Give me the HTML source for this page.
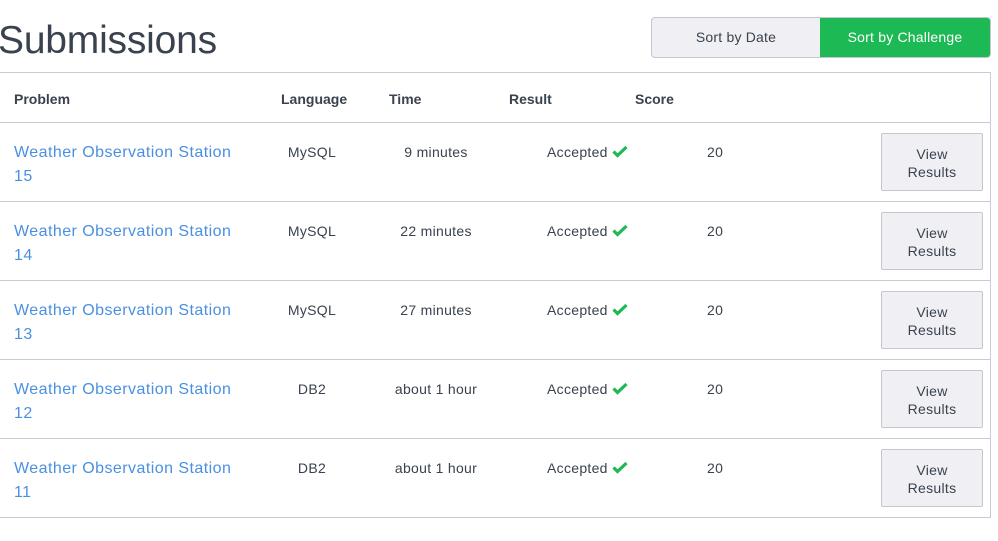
<!DOCTYPE html>
<html><head><style>
body{margin:0;width:998px;height:541px;background:#fff;font-family:"Liberation Sans",sans-serif;position:relative;overflow:hidden;color:#39424e}
.a{position:absolute;white-space:nowrap}
h1{position:absolute;left:-2px;top:19px;margin:0;font-size:39px;font-weight:normal;color:#39424e;letter-spacing:-0.2px}
.sort{position:absolute;left:651px;top:17px;width:338px;height:39px;border:1px solid #c2c7d0;border-radius:4px;overflow:hidden;background:#f0f0f4}
.sort div{position:absolute;top:0;height:39px;line-height:39px;text-align:center;font-size:14px;letter-spacing:0.2px}
.tbl{position:absolute;left:-1px;top:72px;width:990px;height:444px;border:1px solid #c8cad8}
.hl{position:absolute;left:0;width:991px;height:1px;background:#c8cad8}
.th{font-size:14px;font-weight:bold;color:#39424e;top:91px}
.link{color:#4a90e2;font-size:16px;line-height:24px;letter-spacing:0.45px}
.c{font-size:14px;letter-spacing:0.3px}
.vb{position:absolute;left:881px;width:102px;height:58px;border:1px solid #c2c7d0;border-radius:2px;background:#f0f0f4;font-size:14px;text-align:center;line-height:18px;box-sizing:border-box;padding-top:11px;letter-spacing:0.3px}
</style></head><body>
<h1>Submissions</h1>
<div class="sort"><div style="left:0;width:168px;color:#39424e">Sort by Date</div><div style="left:168px;width:170px;background:#1db954;color:#fff">Sort by Challenge</div></div>
<div class="tbl"></div>
<div class="hl" style="top:122px"></div>
<div class="a th" style="left:14px">Problem</div>
<div class="a th" style="left:281px">Language</div>
<div class="a th" style="left:389px">Time</div>
<div class="a th" style="left:509px">Result</div>
<div class="a th" style="left:635px">Score</div>

<div id="rows"></div>
<script>
var d=[["15","MySQL","9 minutes"],["14","MySQL","22 minutes"],["13","MySQL","27 minutes"],["12","DB2","about 1 hour"],["11","DB2","about 1 hour"]];
var h="";
d.forEach(function(r,i){var y=122+79*i;
h+='<div class="a link" style="left:14px;top:'+(y+19)+'px">Weather Observation Station<br>'+r[0]+'</div>';
h+='<div class="a c" style="left:312px;transform:translateX(-50%);top:'+(y+22)+'px">'+r[1]+'</div>';
h+='<div class="a c" style="left:436px;transform:translateX(-50%);top:'+(y+22)+'px">'+r[2]+'</div>';
h+='<div class="a c" style="left:547px;top:'+(y+22)+'px">Accepted <svg width="16" height="13" viewBox="0 0 16 13" style="vertical-align:-1px"><path d="M1.5 6.5l4 4L14.5 2" stroke="#1db954" stroke-width="3.2" fill="none"/></svg></div>';
h+='<div class="a c" style="left:707px;top:'+(y+22)+'px">20</div>';
h+='<div class="vb" style="top:'+(y+11)+'px">View<br>Results</div>';
if(i<4)h+='<div class="hl" style="top:'+(y+79)+'px"></div>';});
document.getElementById("rows").innerHTML=h;
</script>
</body></html>
